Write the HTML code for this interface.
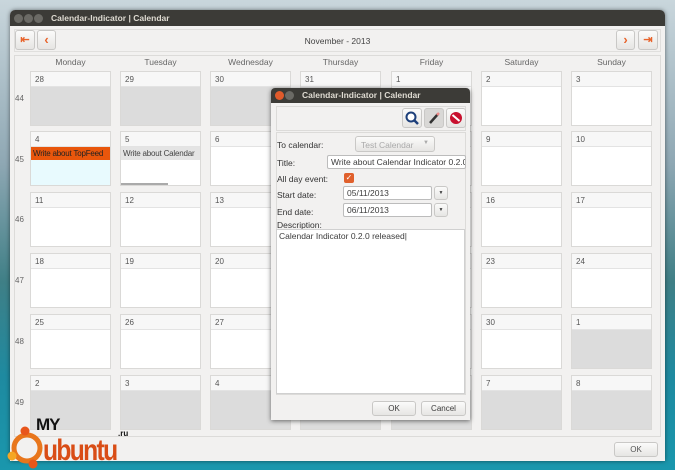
<!DOCTYPE html><html><head><style>
*{box-sizing:border-box;margin:0;padding:0}
body{width:675px;height:470px;overflow:hidden;position:relative;font-family:"Liberation Sans",sans-serif;font-size:8px;color:#3c3c3c;
background:linear-gradient(180deg,#c9d6dc 0%,#8ea7b3 35%,#3f7f86 60%,#1e8aa0 80%,#1a97ad 100%)}
.a{position:absolute}
.win{left:10px;top:10px;width:655px;height:451px;background:#f2f1f0;border-radius:5px 5px 0 0;box-shadow:0 0 4px rgba(0,0,0,.5)}
.tb{left:0;top:0;width:100%;height:16px;background:#3c3b37;border-radius:5px 5px 0 0;color:#dfdbd2;font-weight:bold;font-size:8.5px;line-height:16px}
.dot{width:9px;height:9px;border-radius:50%;background:#6b6a65;top:3.5px}
.btn{background:linear-gradient(#fbfbfa,#e6e5e3);border:1px solid #c9c8c6;border-radius:3px}
.frame{left:4px;top:45px;width:647px;height:382px;border:1px solid #dcdbd9;background:#f2f1f0}
.c{position:absolute;width:81px;height:55px;border:1px solid #dad9d7;background:#fff}
.c i{display:block;font-style:normal;height:15px;border-bottom:1px solid #e3e3e3;background:#f7f7f7;padding:3px 0 0 4px;font-size:8px;color:#555}
.g{background:#dcdcdc}
.h{top:57px;width:81px;text-align:center;color:#666;font-size:8.5px}
.w{left:15px;color:#666;font-size:8px}
.dlg{left:271px;top:88px;width:199px;height:332px;background:#f2f1f0;box-shadow:0 1px 5px rgba(0,0,0,.55);border-radius:4px 4px 0 0}
.lbl{left:6px;font-size:8.5px;color:#333}
.in{background:#fff;border:1px solid #bcbcbc;border-radius:2px;font-size:8.5px;padding:2px 3px;height:14px;line-height:9px}
.ev{font-size:8px;padding:2px 2px;height:13px;line-height:9px;white-space:nowrap;overflow:hidden;letter-spacing:-0.2px}
</style></head><body>
<div class="a win">
 <div class="a tb"><div class="a dot" style="left:4px"></div><div class="a dot" style="left:14px"></div><div class="a dot" style="left:24px"></div><span class="a" style="left:41px">Calendar-Indicator | Calendar</span></div>
 <div class="a" style="left:4px;top:19px;width:647px;height:23px;border:1px solid #e0dfdd"></div>
 <div class="a btn" style="left:5px;top:20px;width:20px;height:20px;color:#e8642c;font-weight:bold;font-size:11px;text-align:center;line-height:18px">⇤</div>
 <div class="a btn" style="left:27px;top:20px;width:19px;height:20px;color:#e8642c;font-weight:bold;font-size:13px;text-align:center;line-height:18px">‹</div>
 <div class="a" style="left:280px;top:26px;width:95px;text-align:center;font-size:8.5px;color:#444">November - 2013</div>
 <div class="a btn" style="left:606px;top:20px;width:19px;height:20px;color:#e8642c;font-weight:bold;font-size:13px;text-align:center;line-height:18px">›</div>
 <div class="a btn" style="left:628px;top:20px;width:20px;height:20px;color:#e8642c;font-weight:bold;font-size:11px;text-align:center;line-height:18px">⇥</div>
 <div class="a frame"></div>
 <div class="a btn" style="left:604px;top:432px;width:44px;height:15px;text-align:center;font-size:8px;line-height:13px;color:#555">OK</div>
</div>
<div class="a h" style="left:30px">Monday</div><div class="a h" style="left:120px">Tuesday</div><div class="a h" style="left:210px">Wednesday</div><div class="a h" style="left:300px">Thursday</div><div class="a h" style="left:391px">Friday</div><div class="a h" style="left:481px">Saturday</div><div class="a h" style="left:571px">Sunday</div>
<div class="a w" style="top:94px">44</div><div class="a w" style="top:155px">45</div><div class="a w" style="top:215px">46</div><div class="a w" style="top:276px">47</div><div class="a w" style="top:337px">48</div><div class="a w" style="top:398px">49</div>
<div class="c g" style="left:30px;top:71px"><i>28</i></div><div class="c g" style="left:120px;top:71px"><i>29</i></div><div class="c g" style="left:210px;top:71px"><i>30</i></div><div class="c g" style="left:300px;top:71px"><i>31</i></div><div class="c" style="left:391px;top:71px"><i>1</i></div><div class="c" style="left:481px;top:71px"><i>2</i></div><div class="c" style="left:571px;top:71px"><i>3</i></div>
<div class="c" style="left:30px;top:131px;background:#e8fafe"><i>4</i><div class="ev" style="background:#e8560c;color:#222">Write about TopFeed</div></div>
<div class="c" style="left:120px;top:131px"><i>5</i><div class="ev" style="background:#e4e4e4;color:#444">Write about Calendar</div><div class="a" style="left:0;bottom:0;width:47px;height:2px;background:#aaa"></div></div>
<div class="c" style="left:210px;top:131px"><i>6</i></div><div class="c" style="left:300px;top:131px"><i>7</i></div><div class="c" style="left:391px;top:131px"><i>8</i></div><div class="c" style="left:481px;top:131px"><i>9</i></div><div class="c" style="left:571px;top:131px"><i>10</i></div>
<div class="c" style="left:30px;top:192px"><i>11</i></div><div class="c" style="left:120px;top:192px"><i>12</i></div><div class="c" style="left:210px;top:192px"><i>13</i></div><div class="c" style="left:300px;top:192px"><i>14</i></div><div class="c" style="left:391px;top:192px"><i>15</i></div><div class="c" style="left:481px;top:192px"><i>16</i></div><div class="c" style="left:571px;top:192px"><i>17</i></div>
<div class="c" style="left:30px;top:253px"><i>18</i></div><div class="c" style="left:120px;top:253px"><i>19</i></div><div class="c" style="left:210px;top:253px"><i>20</i></div><div class="c" style="left:300px;top:253px"><i>21</i></div><div class="c" style="left:391px;top:253px"><i>22</i></div><div class="c" style="left:481px;top:253px"><i>23</i></div><div class="c" style="left:571px;top:253px"><i>24</i></div>
<div class="c" style="left:30px;top:314px"><i>25</i></div><div class="c" style="left:120px;top:314px"><i>26</i></div><div class="c" style="left:210px;top:314px"><i>27</i></div><div class="c" style="left:300px;top:314px"><i>28</i></div><div class="c" style="left:391px;top:314px"><i>29</i></div><div class="c" style="left:481px;top:314px"><i>30</i></div><div class="c g" style="left:571px;top:314px"><i>1</i></div>
<div class="c g" style="left:30px;top:375px"><i>2</i></div><div class="c g" style="left:120px;top:375px"><i>3</i></div><div class="c g" style="left:210px;top:375px"><i>4</i></div><div class="c g" style="left:300px;top:375px"><i>5</i></div><div class="c g" style="left:391px;top:375px"><i>6</i></div><div class="c g" style="left:481px;top:375px"><i>7</i></div><div class="c g" style="left:571px;top:375px"><i>8</i></div>
<div class="a dlg">
 <div class="a tb" style="border-radius:4px 4px 0 0;height:15px;line-height:15px"><div class="a dot" style="left:4px;top:3px;background:#e05a2b"></div><div class="a dot" style="left:14px;top:3px"></div><span class="a" style="left:31px">Calendar-Indicator | Calendar</span></div>
 <div class="a" style="left:5px;top:18px;width:190px;height:25px;border:1px solid #dcdbd9"></div>
 <div class="a btn" style="left:131px;top:20px;width:20px;height:20px"><svg width="18" height="18"><circle cx="8" cy="8" r="4.5" fill="#fff" stroke="#1d3f7a" stroke-width="2"/><line x1="11" y1="11" x2="15" y2="15" stroke="#1d3f7a" stroke-width="2.5"/></svg></div>
 <div class="a btn" style="left:153px;top:20px;width:20px;height:20px;background:#d9d8d6"><svg width="18" height="18"><line x1="5" y1="14" x2="13" y2="5" stroke="#333" stroke-width="2.5"/><line x1="12" y1="6" x2="14" y2="4" stroke="#e88" stroke-width="2.5"/></svg></div>
 <div class="a btn" style="left:175px;top:20px;width:20px;height:20px"><svg width="18" height="18"><circle cx="9" cy="9" r="6" fill="#c8102e"/><line x1="5.5" y1="6" x2="12.5" y2="12" stroke="#fff" stroke-width="2"/></svg></div>
 <div class="a" style="left:5px;top:44px;width:190px;height:263px;border:1px solid #dcdbd9"></div>
 <div class="a lbl" style="top:52px">To calendar:</div>
 <div class="a btn" style="left:84px;top:48px;width:80px;height:16px;color:#aaa;font-size:8.5px;padding:3px 0 0 5px">Test Calendar<span class="a" style="left:67px;top:3px;font-size:6px">▼</span></div>
 <div class="a lbl" style="top:70px">Title:</div>
 <div class="a in" style="left:56px;top:67px;width:139px;white-space:nowrap;overflow:hidden">Write about Calendar Indicator 0.2.0</div>
 <div class="a lbl" style="top:86px">All day event:</div>
 <div class="a" style="left:73px;top:85px;width:10px;height:10px;background:#e0602c;border-radius:2px;color:#fff;font-size:8px;line-height:10px;text-align:center">✓</div>
 <div class="a lbl" style="top:102px">Start date:</div>
 <div class="a in" style="left:72px;top:98px;width:89px">05/11/2013</div>
 <div class="a btn" style="left:163px;top:98px;width:14px;height:14px;font-size:5px;text-align:center;line-height:12px">▼</div>
 <div class="a lbl" style="top:119px">End date:</div>
 <div class="a in" style="left:72px;top:115px;width:89px">06/11/2013</div>
 <div class="a btn" style="left:163px;top:115px;width:14px;height:14px;font-size:5px;text-align:center;line-height:12px">▼</div>
 <div class="a lbl" style="top:132px">Description:</div>
 <div class="a" style="left:5px;top:141px;width:189px;height:165px;background:#fff;border:1px solid #d0d0d0;font-size:8.5px;padding:1px 2px">Calendar Indicator 0.2.0 released|</div>
 <div class="a btn" style="left:101px;top:313px;width:44px;height:15px;text-align:center;line-height:13px">OK</div>
 <div class="a btn" style="left:150px;top:313px;width:45px;height:15px;text-align:center;line-height:13px">Cancel</div>
</div>
<svg class="a" style="left:5px;top:420px" width="40" height="50"><circle cx="22" cy="28" r="13" fill="none" stroke="#e8761c" stroke-width="5"/><circle cx="20" cy="11" r="4.5" fill="#e8561c"/><circle cx="7" cy="36" r="4.5" fill="#f5a623"/><circle cx="28" cy="44" r="4.5" fill="#e8561c"/></svg>
<div class="a" style="left:36px;top:416px;font-size:17px;font-weight:bold;color:#111;letter-spacing:-1px;line-height:17px">MY</div>
<div class="a" style="left:118px;top:429px;font-size:8px;font-weight:bold;color:#111">.ru</div>
<div class="a" style="left:43px;top:436px;font-size:30px;font-weight:bold;color:#d94d16;letter-spacing:-2px;line-height:30px;transform:scaleX(.82);transform-origin:left">ubuntu</div>
</body></html>
